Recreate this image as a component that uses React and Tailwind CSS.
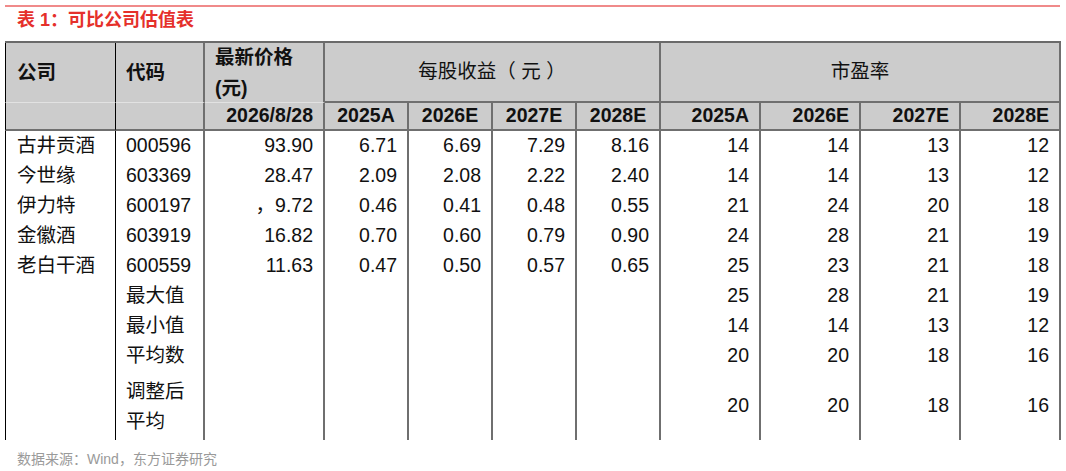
import React from "react";

const COLS =
  "grid grid-cols-[111px_89px_120px_84px_84px_84px_84px_100px_100px_100px_100px]";

const rows = [
  ["古井贡酒", "000596", "93.90", "6.71", "6.69", "7.29", "8.16", "14", "14", "13", "12"],
  ["今世缘", "603369", "28.47", "2.09", "2.08", "2.22", "2.40", "14", "14", "13", "12"],
  ["伊力特", "600197", "，9.72", "0.46", "0.41", "0.48", "0.55", "21", "24", "20", "18"],
  ["金徽酒", "603919", "16.82", "0.70", "0.60", "0.79", "0.90", "24", "28", "21", "19"],
  ["老白干酒", "600559", "11.63", "0.47", "0.50", "0.57", "0.65", "25", "23", "21", "18"],
  ["", "最大值", "", "", "", "", "", "25", "28", "21", "19"],
  ["", "最小值", "", "", "", "", "", "14", "14", "13", "12"],
  ["", "平均数", "", "", "", "", "", "20", "20", "18", "16"],
];

const lastRow = ["", "调整后|平均", "", "", "", "", "", "20", "20", "18", "16"];

function cellClass(i) {
  if (i === 0) return "border-l border-r border-black pl-[11px] justify-start";
  if (i === 1) return "border-r-2 border-[#6f6f6f] pl-[10px] justify-start";
  return "border-r-2 border-[#6f6f6f] pr-[10px] justify-end";
}

function DataRow({ cells, tall }) {
  return (
    <div className={`${COLS} ${tall ? "h-[69px]" : "h-[30px]"}`}>
      {cells.map((c, i) => (
        <div key={i} className={`flex items-center ${cellClass(i)}`}>
          {c.includes("|") ? (
            <div className="flex flex-col leading-[30px] pt-[1px]">
              {c.split("|").map((t) => (
                <span key={t}>{t}</span>
              ))}
            </div>
          ) : (
            <span className="whitespace-nowrap">{c}</span>
          )}
        </div>
      ))}
    </div>
  );
}

export default function App() {
  const eps = ["2025A", "2026E", "2027E", "2028E"];
  return (
    <div
      className="w-[1066px] h-[471px] bg-white text-[#111] overflow-hidden"
      style={{ fontFamily: '"Liberation Sans", "Noto Sans CJK SC", sans-serif' }}
    >
      <div className="pt-[5px] pl-[5px]">
        <div className="h-[2px] w-[1055px] bg-[#f08a8a]" />
        <div className="h-[27px] pl-[12px] text-[18px] leading-[27px] font-bold text-[#e5302b]">
          表 1：可比公司估值表
        </div>
        <div className="mt-[7px] w-[1056px] border-t-2 border-[#6a6a6a]">
          {/* header */}
          <div className={`${COLS} grid-rows-[60px_28px] bg-[#cccccc] text-[19.5px]`}>
            <div className="border-l border-r border-black border-b border-b-[#e2e2e2] flex items-center pl-[11px] font-bold">
              公司
            </div>
            <div className="border-r-2 border-[#6f6f6f] border-b border-b-[#e2e2e2] flex items-center pl-[10px] font-bold">
              代码
            </div>
            <div className="border-r-2 border-[#6f6f6f] border-b border-b-[#e2e2e2] flex flex-col justify-center pl-[10px] font-bold leading-[31px]">
              <span>最新价格</span>
              <span>(元)</span>
            </div>
            <div className="col-span-4 border-r-2 border-b-2 border-[#6f6f6f] flex items-center justify-center whitespace-pre">
              每股收益（ 元 ）
            </div>
            <div className="col-span-4 border-r-2 border-b-2 border-[#6f6f6f] flex items-center justify-center">
              市盈率
            </div>
            {/* row 2 */}
            <div className="border-l border-r border-black border-b-2 border-b-[#6f6f6f]" />
            <div className="border-r-2 border-b-2 border-[#6f6f6f]" />
            <div className="border-r-2 border-b-2 border-[#6f6f6f] flex items-center justify-end pr-[10px] font-bold">
              2026/8/28
            </div>
            {eps.map((y) => (
              <div
                key={"e" + y}
                className="border-r-2 border-b-2 border-[#6f6f6f] flex items-center justify-center font-bold"
              >
                {y}
              </div>
            ))}
            {eps.map((y) => (
              <div
                key={"p" + y}
                className="border-r-2 border-b-2 border-[#6f6f6f] flex items-center justify-end pr-[10px] font-bold"
              >
                {y}
              </div>
            ))}
          </div>
          {/* body */}
          <div className="text-[19.5px]">
            {rows.map((r, i) => (
              <DataRow key={i} cells={r} />
            ))}
            <DataRow cells={lastRow} tall />
          </div>
        </div>
        <div className="mt-[9px] pl-[12px] text-[14px] leading-[20px] text-[#9a9a9a]">
          数据来源：Wind，东方证券研究
        </div>
      </div>
    </div>
  );
}
